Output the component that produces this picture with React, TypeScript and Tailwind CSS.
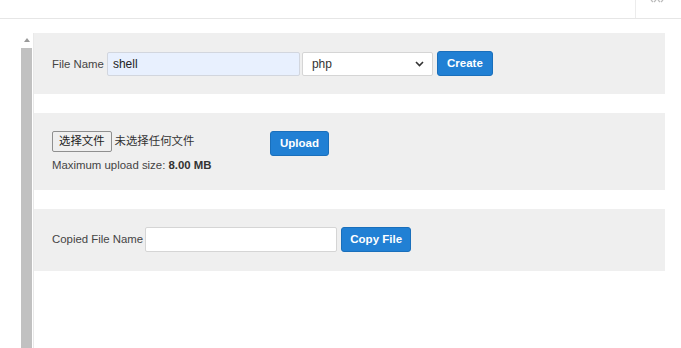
import React from "react";

export default function App() {
  const font = { fontFamily: '"Liberation Sans", Arial, "Noto Sans CJK SC", sans-serif' };
  return (
    <div className="w-[681px] h-[348px] bg-white overflow-hidden text-[11.4px] text-[#444]" style={font}>
      {/* header */}
      <div className="h-[19px] border-b border-[#e6e6e6] flex">
        <div className="flex-1" />
        <div className="w-[46px] border-l border-[#ececec] relative">
          <svg className="absolute left-[14px] top-[-6px]" width="14" height="9" viewBox="0 0 14 9">
            <path d="M1 6 L3 8 M6 6 L4 8 M8 6 L10 8 M13 6 L11 8" stroke="#bbb" strokeWidth="1.2" fill="none" />
          </svg>
        </div>
      </div>
      <div className="flex mt-[14px] ml-[20px] mr-[16px]">
        {/* scrollbar */}
        <div className="w-[13px] flex flex-col items-center">
          <div className="h-[15px] w-full flex items-start justify-center pt-[5px]">
            <svg width="6" height="4" viewBox="0 0 6 4">
              <path d="M3 0 L6 4 L0 4 Z" fill="#9a9a9a" />
            </svg>
          </div>
          <div className="w-[11px] ml-[-1px] h-[320px] bg-[#c1c1c1]" />
        </div>
        <div className="w-px bg-[#e9e9e9] h-[320px]" />
        {/* content */}
        <div className="flex-1 flex flex-col gap-[19px]">
          <div className="bg-[#efefef] h-[61px] pl-[18px] pt-[19px] flex items-start">
            <span className="leading-[24px] mr-[3px]">File Name</span>
            <div className="w-[193px] h-[24px] bg-[#e8f0fe] border border-[#d2d6de] rounded-[2px] px-[5px] leading-[22px] text-[12px] text-[#222]">shell</div>
            <div className="ml-[2px] w-[131px] h-[24px] bg-white border border-[#d5d5d5] rounded-[2px] px-[9px] flex items-center justify-between text-[12px] text-[#333]">
              <span>php</span>
              <svg width="9" height="6" viewBox="0 0 9 6" className="mr-[-1px]">
                <path d="M1 1 L4.5 4.5 L8 1" stroke="#333" strokeWidth="1.6" fill="none" />
              </svg>
            </div>
            <div className="ml-[4px] mt-[-1px] w-[56px] h-[25px] bg-[#2180d4] border border-[#1a6fbb] rounded-[3px] text-white font-bold text-[11.5px] flex items-center justify-center">Create</div>
          </div>
          <div className="bg-[#efefef] h-[77px] pl-[18px] pt-[18px] flex items-start">
            <div className="flex flex-col w-[218px]">
              <div className="flex items-center">
                <div className="h-[21px] px-[6px] border border-[#8f8f8f] rounded-[2px] bg-[#efefef] text-[11.4px] text-[#222] leading-[19px]">选择文件</div>
                <span className="ml-[3px] text-[11.4px] text-[#333]">未选择任何文件</span>
              </div>
              <div className="mt-[5px]">Maximum upload size: <b className="text-[#333]">8.00 MB</b></div>
            </div>
            <div className="w-[59px] h-[25px] bg-[#2180d4] border border-[#1a6fbb] rounded-[3px] text-white font-bold text-[11.5px] flex items-center justify-center">Upload</div>
          </div>
          <div className="bg-[#efefef] h-[62px] pl-[18px] pt-[18px] flex items-start">
            <span className="leading-[25px] mr-[2px]">Copied File Name</span>
            <div className="w-[192px] h-[25px] bg-white border border-[#d5d5d5] rounded-[2px]" />
            <div className="ml-[4px] w-[70px] h-[25px] bg-[#2180d4] border border-[#1a6fbb] rounded-[3px] text-white font-bold text-[11.5px] flex items-center justify-center">Copy File</div>
          </div>
        </div>
      </div>
    </div>
  );
}
